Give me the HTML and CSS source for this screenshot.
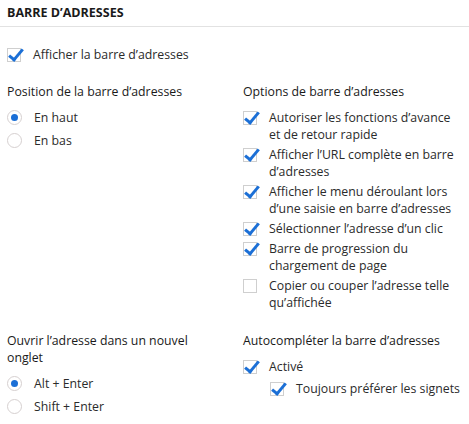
FILE: index.html
```html
<!DOCTYPE html>
<html lang="fr">
<head>
    <meta charset="UTF-8">
    <title>Barre d'adresses</title>
    <link rel="stylesheet" href="styles.css">
</head>
<body>
    <h2 class="section-title">BARRE D’ADRESSES</h2>

    <div class="settings">
        <label class="option top-option">
            <span class="box checked"></span>
            <span>Afficher la barre d’adresses</span>
        </label>

        <div class="columns">
            <div class="group left">
                <h3>Position de la barre d’adresses</h3>
                <label class="option radio-option">
                    <span class="radio selected"></span>
                    <span>En haut</span>
                </label>
                <label class="option radio-option">
                    <span class="radio"></span>
                    <span>En bas</span>
                </label>
            </div>

            <div class="group">
                <h3>Options de barre d’adresses</h3>
                <label class="option">
                    <span class="box checked"></span>
                    <span>Autoriser les fonctions d’avance et de retour rapide</span>
                </label>
                <label class="option">
                    <span class="box checked"></span>
                    <span>Afficher l’URL complète en barre d’adresses</span>
                </label>
                <label class="option">
                    <span class="box checked"></span>
                    <span>Afficher le menu déroulant lors d’une saisie en barre d’adresses</span>
                </label>
                <label class="option">
                    <span class="box checked"></span>
                    <span>Sélectionner l’adresse d’un clic</span>
                </label>
                <label class="option">
                    <span class="box checked"></span>
                    <span>Barre de progression du chargement de page</span>
                </label>
                <label class="option">
                    <span class="box"></span>
                    <span>Copier ou couper l’adresse telle qu’affichée</span>
                </label>
            </div>

            <div class="group left">
                <h3>Ouvrir l’adresse dans un nouvel onglet</h3>
                <label class="option radio-option">
                    <span class="radio selected"></span>
                    <span>Alt + Enter</span>
                </label>
                <label class="option radio-option">
                    <span class="radio"></span>
                    <span>Shift + Enter</span>
                </label>
            </div>

            <div class="group">
                <h3>Autocompléter la barre d’adresses</h3>
                <label class="option">
                    <span class="box checked"></span>
                    <span>Activé</span>
                </label>
                <label class="option sub-option">
                    <span class="box checked"></span>
                    <span>Toujours préférer les signets</span>
                </label>
            </div>
        </div>
    </div>
</body>
</html>
```

FILE: styles.css
```css
body {
    margin: 0;
    font-family: "Open Sans", "Noto Sans", sans-serif;
    font-size: 12.3px;
    color: #222;
    background: #fff;
}
.section-title {
    margin: 0;
    padding: 7px 7px 8px;
    font-size: 12.5px;
    font-weight: 700;
    line-height: 11px;
    color: #1a1a1a;
    border-bottom: 1px solid #e2e2e2;
}
.settings {
    padding: 19px 0 0 7px;
}
.top-option {
    margin-bottom: 0;
}
.columns {
    display: grid;
    grid-template-columns: 236px 1fr;
    row-gap: 18px;
    margin-top: 20px;
}
.group.left {
    padding-right: 30px;
}
.group h3 {
    margin: 0 0 9px;
    font-size: 12.3px;
    font-weight: 400;
    line-height: 17px;
    color: #1a1a1a;
}
.option {
    display: flex;
    align-items: flex-start;
    gap: 12px;
    line-height: 17px;
    margin-bottom: 3px;
    color: #2b2b2b;
    padding-right: 12px;
}
.radio-option {
    margin-bottom: 6px;
}
.sub-option {
    margin-left: 27px;
    margin-top: 5px;
    padding-right: 0;
}
.box {
    position: relative;
    flex: none;
    width: 14px;
    height: 14px;
    margin-top: 2px;
    border: 1px solid #cfcfcf;
    box-sizing: border-box;
    background: #fff;
}
.box.checked::after {
    content: "";
    position: absolute;
    left: 4px;
    top: -3px;
    width: 5px;
    height: 12px;
    border-right: 3px solid #1b6fd6;
    border-bottom: 3px solid #1b6fd6;
    transform: rotate(40deg);
}
.radio {
    flex: none;
    width: 15px;
    height: 15px;
    margin-top: 1px;
    border: 1px solid #d6d0d0;
    border-radius: 50%;
    box-sizing: border-box;
    display: flex;
    align-items: center;
    justify-content: center;
}
.radio.selected::after {
    content: "";
    width: 7px;
    height: 7px;
    border-radius: 50%;
    background: #1b6fd6;
}
```
